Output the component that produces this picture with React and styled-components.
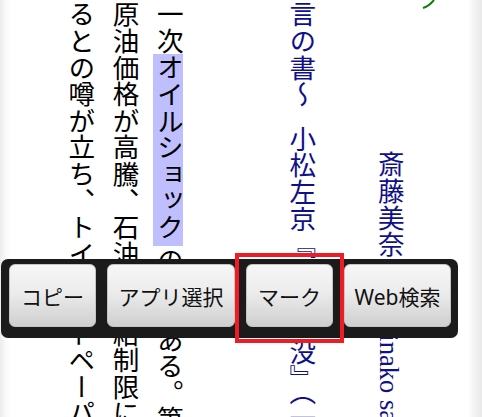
import React from 'react';
import styled, { createGlobalStyle, css } from 'styled-components';

const GlobalStyle = createGlobalStyle`
  html, body {
    margin: 0;
    padding: 0;
    background: #fff;
  }
`;

const Page = styled.div`
  position: relative;
  width: 482px;
  height: 417px;
  overflow: hidden;
  background: linear-gradient(
    to right,
    #ececec 0px,
    #fafafa 6px,
    #ffffff 11px,
    #ffffff 468px,
    #f4f4f4 474px,
    #e9e9e9 482px
  );
`;

const Reader = styled.div`
  writing-mode: vertical-rl;
  height: 417px;
  width: 482px;
  box-sizing: border-box;
  padding-right: 27px;
  padding-top: 1px;
  font-family: 'Liberation Serif', 'Noto Sans CJK JP', serif;
  font-size: 26.6px;
  line-height: 44.2px;
  white-space: nowrap;
  overflow: hidden;
`;

const Line = styled.div`
  color: ${(props) => props.color || '#000'};
  padding-top: ${(props) => props.indent || 0}px;
`;

const Skip = styled.span`
  display: inline-block;
  height: ${(props) => props.size}px;
  width: 1px;
`;

const Marked = styled.span`
  background: #bfbfff;
  padding-bottom: 6px;
`;

const Stroke = styled.svg`
  position: absolute;
  left: 420px;
  top: 0;
`;

const Toolbar = styled.div`
  position: absolute;
  left: 1px;
  top: 259px;
  width: 457px;
  height: 79px;
  box-sizing: border-box;
  padding: 5px 8px 11px 8px;
  background: #1b1b1b;
  border-radius: 7px;
  display: flex;
  align-items: stretch;
  gap: 11px;
`;

const Button = styled.div`
  position: relative;
  width: ${(props) => props.w}px;
  flex: none;
  box-sizing: border-box;
  border: 1px solid #c4c4c4;
  border-radius: 6px;
  background: linear-gradient(to bottom, #f6f6f6 0%, #ececec 45%, #cfcfcf 100%);
  display: flex;
  align-items: center;
  justify-content: center;
  font-family: 'Noto Sans', 'Noto Sans CJK JP', sans-serif;
  font-size: 21px;
  color: #111;

  ${(props) =>
    props.framed &&
    css`
      &::after {
        content: '';
        position: absolute;
        left: -12px;
        right: -12px;
        top: -12px;
        bottom: -17px;
        border: 4.5px solid #ee1c24;
      }
    `}
`;

const NAVY = '#10108a';

export default function App() {
  return (
    <Page>
      <GlobalStyle />
      <Reader>
        <Line>&nbsp;</Line>
        <Line color={NAVY} indent={150}>
          斎藤美奈子　Minako saito
        </Line>
        <Line>&nbsp;</Line>
        <Line color={NAVY}>
          言の書～<Skip size={18} />小松左京『日本沈没』（一九七三年）
        </Line>
        <Line>&nbsp;</Line>
        <Line>&nbsp;</Line>
        <Line>
          一次<Marked>オイルショック</Marked>の時である。第
        </Line>
        <Line>原油価格が高騰、石油の供給制限に</Line>
        <Line>るとの噂が立ち、トイレットペーパ</Line>
        <Line>&nbsp;</Line>
      </Reader>
      <Stroke width="18" height="10" viewBox="0 0 18 10">
        <path d="M3 8 Q9 6 14 0" stroke="#0b7d0b" strokeWidth="2" fill="none" />
      </Stroke>
      <Toolbar>
        <Button w={87}>コピー</Button>
        <Button w={128}>アプリ選択</Button>
        <Button w={87} framed>
          マーク
        </Button>
        <Button w={107}>Web検索</Button>
      </Toolbar>
    </Page>
  );
}
